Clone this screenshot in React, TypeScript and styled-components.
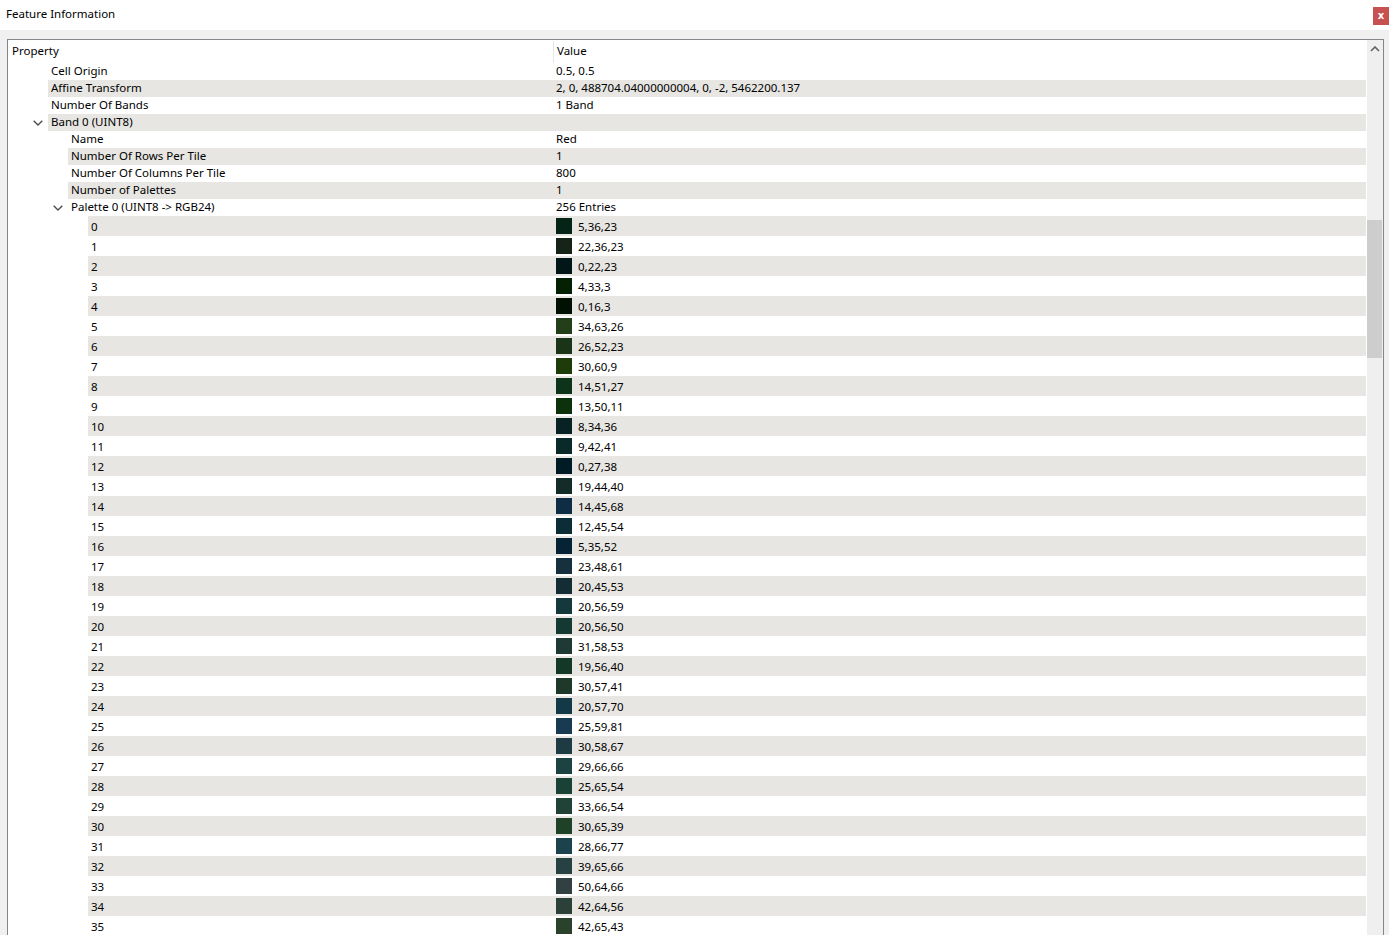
import React from "react";
import styled, { createGlobalStyle } from "styled-components";

const Global = createGlobalStyle`
  html, body { margin: 0; padding: 0; background: #f0f0f0; }
  body { font-family: "Noto Sans", "Segoe UI", sans-serif; font-size: 11.5px; color: #000; }
  #root { height: 935px; overflow: hidden; }
`;

const Window = styled.div`
  width: 1389px;
  height: 935px;
  display: flex;
  flex-direction: column;
  background: #f0f0f0;
  overflow: hidden;
`;

const TitleBar = styled.div`
  height: 30px;
  flex: 0 0 30px;
  background: #ffffff;
  display: flex;
  align-items: center;
  justify-content: space-between;
  padding-left: 6px;
  box-sizing: border-box;
`;

const Title = styled.span`
  font-size: 11.5px;
  line-height: 16px;
  margin-top: -2px;
`;

const CloseButton = styled.button`
  width: 16px;
  height: 18px;
  margin-top: 2px;
  border: none;
  padding: 0;
  background: #c75050;
  color: #fff;
  font-family: "DejaVu Sans", sans-serif;
  font-size: 10px;
  font-weight: bold;
  line-height: 18px;
  display: flex;
  align-items: center;
  justify-content: center;
`;

const Body = styled.div`
  flex: 1;
  padding: 9px 5px 0 7px;
  display: flex;
  min-height: 0;
`;

const Frame = styled.div`
  flex: 1;
  border: 1px solid #85868c;
  border-bottom: none;
  background: #ffffff;
  display: flex;
  min-height: 0;
  overflow: hidden;
`;

const Tree = styled.div`
  flex: 1;
  display: flex;
  flex-direction: column;
  min-width: 0;
  padding-right: 1px;
`;

const HeaderRow = styled.div`
  height: 23px;
  flex: 0 0 23px;
  display: grid;
  grid-template-columns: 546px 1fr;
`;

const HeaderCell = styled.div<{ $first?: boolean }>`
  display: flex;
  align-items: center;
  padding-left: ${(p) => (p.$first ? "4px" : "3px")};
  border-right: ${(p) => (p.$first ? "1px solid #e5e5e5" : "none")};
  margin-top: 1px;
  padding-bottom: 3px;
`;

const Row = styled.div<{ $h: number }>`
  height: ${(p) => p.$h}px;
  flex: 0 0 ${(p) => p.$h}px;
  display: grid;
  grid-template-columns: 546px 1fr;
`;

const PropCell = styled.div<{ $level: number }>`
  display: flex;
  align-items: stretch;
  padding-left: ${(p) => 20 + p.$level * 20}px;
  position: relative;
`;

const Label = styled.div<{ $alt: boolean; $shift: number }>`
  flex: 1;
  display: flex;
  align-items: center;
  padding-left: 3px;
  padding-bottom: ${(p) => p.$shift}px;
  background: ${(p) => (p.$alt ? "#e7e6e2" : "transparent")};
  white-space: nowrap;
`;

const Chevron = styled.svg<{ $level: number }>`
  position: absolute;
  top: 50%;
  margin-top: -3px;
  left: ${(p) => 25 + (p.$level - 1) * 20}px;
  width: 10px;
  height: 6px;
`;

const ValueCell = styled.div<{ $alt: boolean; $shift: number }>`
  display: flex;
  align-items: center;
  gap: 6px;
  padding-left: 2px;
  padding-bottom: ${(p) => p.$shift}px;
  background: ${(p) => (p.$alt ? "#e7e6e2" : "transparent")};
  white-space: nowrap;
`;

const Swatch = styled.span`
  width: 16px;
  height: 16px;
  flex: 0 0 16px;
`;

const ScrollBar = styled.div`
  width: 16px;
  flex: 0 0 16px;
  background: #efefef;
  display: flex;
  flex-direction: column;
  align-items: center;
`;

const ArrowBox = styled.div`
  height: 17px;
  display: flex;
  align-items: center;
  justify-content: center;
  width: 16px;
`;

const Thumb = styled.div`
  margin-top: 163px;
  width: 15px;
  align-self: flex-start;
  height: 138px;
  background: #cdcdcd;
`;

const palette = [
  "5,36,23", "22,36,23", "0,22,23", "4,33,3", "0,16,3", "34,63,26",
  "26,52,23", "30,60,9", "14,51,27", "13,50,11", "8,34,36", "9,42,41",
  "0,27,38", "19,44,40", "14,45,68", "12,45,54", "5,35,52", "23,48,61",
  "20,45,53", "20,56,59", "20,56,50", "31,58,53", "19,56,40", "30,57,41",
  "20,57,70", "25,59,81", "30,58,67", "29,66,66", "25,65,54", "33,66,54",
  "30,65,39", "28,66,77", "39,65,66", "50,64,66", "42,64,56", "42,65,43",
];

type Item = {
  label: string;
  value: string;
  level: number;
  expanded?: boolean;
  swatch?: string;
};

const items: Item[] = [
  { label: "Cell Origin", value: "0.5, 0.5", level: 1 },
  { label: "Affine Transform", value: "2, 0, 488704.04000000004, 0, -2, 5462200.137", level: 1 },
  { label: "Number Of Bands", value: "1 Band", level: 1 },
  { label: "Band 0 (UINT8)", value: "", level: 1, expanded: true },
  { label: "Name", value: "Red", level: 2 },
  { label: "Number Of Rows Per Tile", value: "1", level: 2 },
  { label: "Number Of Columns Per Tile", value: "800", level: 2 },
  { label: "Number of Palettes", value: "1", level: 2 },
  { label: "Palette 0 (UINT8 -> RGB24)", value: "256 Entries", level: 2, expanded: true },
  ...palette.map((c, i) => ({ label: String(i), value: c, level: 3, swatch: c })),
];

export default function App() {
  return (
    <>
      <Global />
      <Window>
        <TitleBar>
          <Title>Feature Information</Title>
          <CloseButton aria-label="close">x</CloseButton>
        </TitleBar>
        <Body>
          <Frame>
            <Tree>
              <HeaderRow>
                <HeaderCell $first>Property</HeaderCell>
                <HeaderCell>Value</HeaderCell>
              </HeaderRow>
              {items.map((it, i) => {
                const alt = i % 2 === 1;
                const shift = it.swatch ? 0 : 2;
                return (
                  <Row key={i} $h={it.swatch ? 20 : 17}>
                    <PropCell $level={it.level}>
                      {it.expanded && (
                        <Chevron $level={it.level} viewBox="0 0 10 6">
                          <path d="M0.7 0.7 L5 5 L9.3 0.7" fill="none" stroke="#4a4a4a" strokeWidth="1.3" />
                        </Chevron>
                      )}
                      <Label $alt={alt} $shift={shift}>{it.label}</Label>
                    </PropCell>
                    <ValueCell $alt={alt} $shift={shift}>
                      {it.swatch && <Swatch style={{ background: `rgb(${it.swatch})` }} />}
                      <span>{it.value}</span>
                    </ValueCell>
                  </Row>
                );
              })}
            </Tree>
            <ScrollBar>
              <ArrowBox>
                <svg width="10" height="6" viewBox="0 0 10 6">
                  <path d="M1 5 L5 1 L9 5" fill="none" stroke="#606060" strokeWidth="1.6" />
                </svg>
              </ArrowBox>
              <Thumb />
            </ScrollBar>
          </Frame>
        </Body>
      </Window>
    </>
  );
}
